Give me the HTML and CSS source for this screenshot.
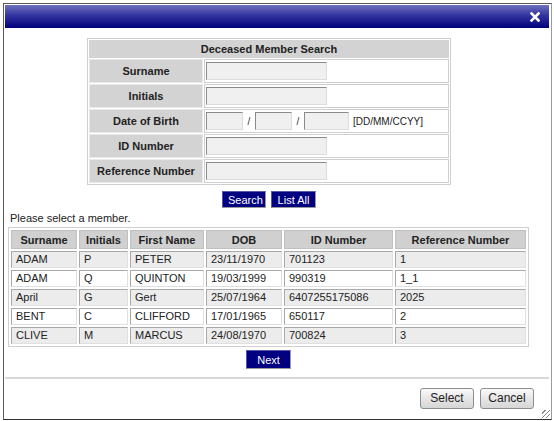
FILE: index.html
```html
<!DOCTYPE html>
<html lang="en">
<head>
    <meta charset="UTF-8">
    <title>Deceased Member Search</title>
    <link rel="stylesheet" href="styles.css">
</head>
<body>
    <div class="dialogo">
        <div class="barra-titulo">
            <span class="cerrar">
                <svg width="10" height="10" viewBox="0 0 10 10">
                    <path d="M1.5 1.5 L8.5 8.5 M8.5 1.5 L1.5 8.5" stroke="#fff" stroke-width="2.6" stroke-linecap="square"/>
                </svg>
            </span>
        </div>

        <div class="cuerpo">
            <table class="busqueda">
                <tr>
                    <th colspan="2" class="titulo-busqueda">Deceased Member Search</th>
                </tr>
                <tr>
                    <td class="etiqueta">Surname</td>
                    <td class="campo"><input type="text" class="caja"></td>
                </tr>
                <tr>
                    <td class="etiqueta">Initials</td>
                    <td class="campo"><input type="text" class="caja"></td>
                </tr>
                <tr>
                    <td class="etiqueta">Date of Birth</td>
                    <td class="campo">
                        <input type="text" class="caja caja-dia"><span class="barra">/</span><input type="text" class="caja caja-dia"><span class="barra">/</span><input type="text" class="caja caja-anio"><span class="formato">[DD/MM/CCYY]</span>
                    </td>
                </tr>
                <tr>
                    <td class="etiqueta">ID Number</td>
                    <td class="campo"><input type="text" class="caja"></td>
                </tr>
                <tr>
                    <td class="etiqueta">Reference Number</td>
                    <td class="campo"><input type="text" class="caja"></td>
                </tr>
            </table>

            <div class="acciones">
                <button class="btn-azul btn-search">Search</button>
                <button class="btn-azul btn-list">List All</button>
            </div>

            <p class="aviso">Please select a member.</p>

            <table class="resultados">
                <tr>
                    <th class="c-surname">Surname</th>
                    <th class="c-initials">Initials</th>
                    <th class="c-first">First Name</th>
                    <th class="c-dob">DOB</th>
                    <th class="c-id">ID Number</th>
                    <th class="c-ref">Reference Number</th>
                </tr>
                <tr class="impar">
                    <td>ADAM</td><td>P</td><td>PETER</td><td>23/11/1970</td><td>701123</td><td>1</td>
                </tr>
                <tr>
                    <td>ADAM</td><td>Q</td><td>QUINTON</td><td>19/03/1999</td><td>990319</td><td>1_1</td>
                </tr>
                <tr class="impar">
                    <td>April</td><td>G</td><td>Gert</td><td>25/07/1964</td><td>6407255175086</td><td>2025</td>
                </tr>
                <tr>
                    <td>BENT</td><td>C</td><td>CLIFFORD</td><td>17/01/1965</td><td>650117</td><td>2</td>
                </tr>
                <tr class="impar">
                    <td>CLIVE</td><td>M</td><td>MARCUS</td><td>24/08/1970</td><td>700824</td><td>3</td>
                </tr>
            </table>

            <div class="acciones acciones-next">
                <button class="btn-azul btn-next">Next</button>
            </div>
        </div>

        <div class="pie">
            <button class="btn-gris">Select</button>
            <button class="btn-gris">Cancel</button>
            <span class="agarre"></span>
        </div>
    </div>
</body>
</html>
```

FILE: styles.css
```css
body {
    margin: 0;
    padding: 3px;
    background-color: #fff;
    font-family: 'Liberation Sans', Arial, sans-serif;
    font-size: 11px;
    color: #222;
}

.dialogo {
    width: 544px;
    height: 413px;
    border: 1px solid #5a5a5a;
    border-right-color: #9a9a9a;
    border-bottom-color: #333;
    padding: 1px 2px 1px 1px;
    display: flex;
    flex-direction: column;
    position: relative;
    background-color: #fff;
}

.barra-titulo {
    height: 23px;
    flex-shrink: 0;
    background: linear-gradient(to bottom, #7070bc 0%, #3434a0 45%, #00007a 100%);
    display: flex;
    justify-content: flex-end;
    align-items: center;
    padding-right: 9px;
}

.cerrar {
    display: flex;
    width: 10px;
    height: 10px;
}

.cuerpo {
    flex: 1;
    padding-top: 10px;
}

/* formulario de busqueda */
.busqueda {
    margin-left: 82px;
    width: 364px;
    border: 1px solid #cfcfcf;
    border-spacing: 1px;
    border-collapse: separate;
}

.busqueda td,
.busqueda th {
    padding: 0;
}

.titulo-busqueda {
    height: 18px;
    background-color: #d3d3d3;
    font-weight: bold;
    text-align: center;
    color: #222;
}

.etiqueta {
    width: 112px;
    height: 22px;
    background-color: #d3d3d3;
    border: 1px solid #e8e8e8;
    font-weight: bold;
    text-align: center;
    color: #222;
}

.campo {
    border: 1px solid #cfcfcf;
    padding-left: 1px !important;
    white-space: nowrap;
}

.caja {
    box-sizing: border-box;
    width: 121px;
    height: 18px;
    margin: 0;
    padding: 0;
    background-color: #f0f0f0;
    border: 1px solid;
    border-color: #8a8a8a #dcdcdc #dcdcdc #8a8a8a;
    vertical-align: middle;
}

.caja-dia {
    width: 37px;
}

.caja-anio {
    width: 45px;
}

.barra {
    display: inline-block;
    width: 12px;
    text-align: center;
    vertical-align: middle;
    color: #333;
    font-size: 10px;
}

.formato {
    margin-left: 4px;
    font-size: 10px;
    vertical-align: middle;
    color: #222;
}

/* botones */
.acciones {
    display: flex;
    justify-content: center;
    gap: 5px;
    margin-top: 6px;
    padding-right: 16px;
}

.btn-azul {
    box-sizing: border-box;
    height: 17px;
    padding: 0 5px;
    background-color: #000080;
    color: #fff;
    font-family: 'Liberation Sans', Arial, sans-serif;
    font-size: 11px;
    border: 1px solid;
    border-color: #5858a8 #9a9a9a #9a9a9a #5858a8;
    cursor: pointer;
}

.btn-search {
    width: 44px;
}

.btn-list {
    width: 45px;
}

.btn-next {
    width: 45px;
    height: 19px;
}

.aviso {
    margin: 4px 0 0 5px;
    color: #222;
}

/* tabla de resultados */
.resultados {
    margin: 3px 0 0 3px;
    border: 1px solid #cfcfcf;
    border-spacing: 2px;
    border-collapse: separate;
}

.resultados th {
    height: 17px;
    padding: 0;
    background-color: #d0d0d0;
    border: 1px solid #c0c0c0;
    font-weight: bold;
    text-align: center;
    color: #222;
}

.resultados td {
    height: 15px;
    padding: 0 0 0 4px;
    background-color: #fff;
    border: 1px solid;
    border-color: #a8a8a8 #e0e0e0 #e0e0e0 #a8a8a8;
    color: #222;
    line-height: 13px;
}

.resultados .impar td {
    background-color: #ececec;
}

.c-surname { width: 64px; }
.c-initials { width: 47px; }
.c-first { width: 72px; }
.c-dob { width: 74px; }
.c-id { width: 107px; }
.c-ref { width: 129px; }

.acciones-next {
    margin-top: 3px;
    padding-right: 17px;
}

/* pie */
.pie {
    border-top: 2px solid #d8d8d8;
    height: 38px;
    flex-shrink: 0;
    display: flex;
    justify-content: flex-end;
    align-items: center;
    gap: 6px;
    padding-right: 15px;
    margin-bottom: 1px;
}

.btn-gris {
    box-sizing: border-box;
    width: 54px;
    height: 21px;
    padding: 0;
    background: linear-gradient(to bottom, #fafafa 0%, #e6e6e6 50%, #d6d6d6 100%);
    border: 1px solid #8e8e8e;
    border-radius: 3px;
    font-family: 'Liberation Sans', Arial, sans-serif;
    font-size: 12px;
    color: #222;
    cursor: pointer;
}

.agarre {
    position: absolute;
    right: 1px;
    bottom: 1px;
    width: 8px;
    height: 8px;
    background: repeating-linear-gradient(135deg, transparent 0, transparent 2px, #8a8a8a 2px, #8a8a8a 3px);
}
```
